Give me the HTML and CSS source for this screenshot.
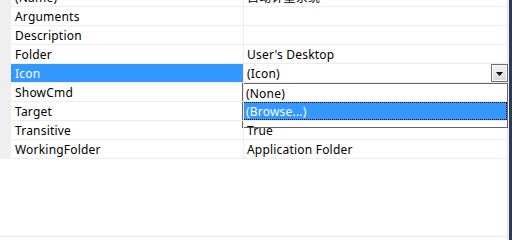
FILE: index.html
```html
<!DOCTYPE html>
<html>
<head>
<meta charset="utf-8">
<link rel="stylesheet" href="styles.css">
</head>
<body>
<div class="frame">
  <div class="pane">
    <div class="grid">
      <div class="row"><div class="gut"></div><div class="name">(Name)</div><div class="val">自动计量系统</div></div>
      <div class="row"><div class="gut"></div><div class="name">Arguments</div><div class="val"></div></div>
      <div class="row"><div class="gut"></div><div class="name">Description</div><div class="val"></div></div>
      <div class="row"><div class="gut"></div><div class="name">Folder</div><div class="val">User's Desktop</div></div>
      <div class="row sel">
        <div class="gut"></div><div class="name">Icon</div>
        <div class="val"><span class="txt">(Icon)</span><span class="btn"><svg width="7" height="4" viewBox="0 0 7 4"><polygon points="0,0 7,0 3.5,4" fill="#000"/></svg></span></div>
        <div class="list">
          <div class="item">(None)</div>
          <div class="item hot">(Browse...)</div>
        </div>
      </div>
      <div class="row"><div class="gut"></div><div class="name">ShowCmd</div><div class="val"></div></div>
      <div class="row"><div class="gut"></div><div class="name">Target</div><div class="val"></div></div>
      <div class="row"><div class="gut"></div><div class="name">Transitive</div><div class="val">True</div></div>
      <div class="row"><div class="gut"></div><div class="name">WorkingFolder</div><div class="val">Application Folder</div></div>
    </div>
    <div class="desc"></div>
  </div>
  <div class="gap"></div>
  <div class="bar"></div>
</div>
</body>
</html>
```
FILE: styles.css
```css
html, body {
  margin: 0;
  padding: 0;
  background: #fff;
}
body {
  font-family: "Noto Sans", "Noto Sans CJK SC", sans-serif;
  font-size: 12px;
  line-height: 17px;
  letter-spacing: 0.2px;
  color: #000;
}
.frame {
  display: flex;
  width: 512px;
  height: 240px;
  overflow: hidden;
}
.pane {
  width: 507px;
  border-right: 1px solid #dedede;
  display: flex;
  flex-direction: column;
}
.grid {
  margin-top: -12px;
}
.row {
  display: flex;
  height: 19px;
  position: relative;
}
.gut {
  width: 11px;
  background: #efeff2;
}
.name {
  width: 228px;
  padding-left: 4px;
  padding-top: 1px;
  height: 17px;
  border-right: 1px solid #ededed;
  border-bottom: 1px solid #ededed;
  white-space: nowrap;
}
.val {
  flex: 1;
  display: flex;
  padding-top: 1px;
  height: 17px;
  padding-left: 3px;
  border-bottom: 1px solid #ededed;
  white-space: nowrap;
}
.sel .name {
  background: #3399ff;
  color: #fff;
}
.btn {
  margin-left: auto;
  margin-right: -1px;
  margin-top: -1px;
  width: 15px;
  height: 15px;
  border: 1px solid #707070;
  background: linear-gradient(#f3f3f3, #dadada);
  box-shadow: inset 0 0 0 1px #fafafa;
  display: flex;
  align-items: center;
  justify-content: center;
  padding-top: 1px;
  box-sizing: content-box;
}
.btn svg {
  display: block;
}
.list {
  position: absolute;
  left: 242px;
  top: 19px;
  width: 264px;
  height: 43px;
  border: 1px solid #646464;
  background: #fff;
}
.item {
  height: 17px;
  padding-top: 1px;
  padding-left: 3px;
  white-space: nowrap;
}
.item.hot {
  background: #3399ff;
  color: #fff;
  border: 1px dotted #000;
  padding-left: 2px;
  padding-top: 1px;
  height: 15px;
  line-height: 15px;
}
.desc {
  margin-top: auto;
  height: 3px;
  border-top: 1px solid #e6e6e6;
}
.gap {
  width: 1px;
  background: #f4f4f4;
}
.bar {
  width: 3px;
  background: #2a3a57;
}
```
